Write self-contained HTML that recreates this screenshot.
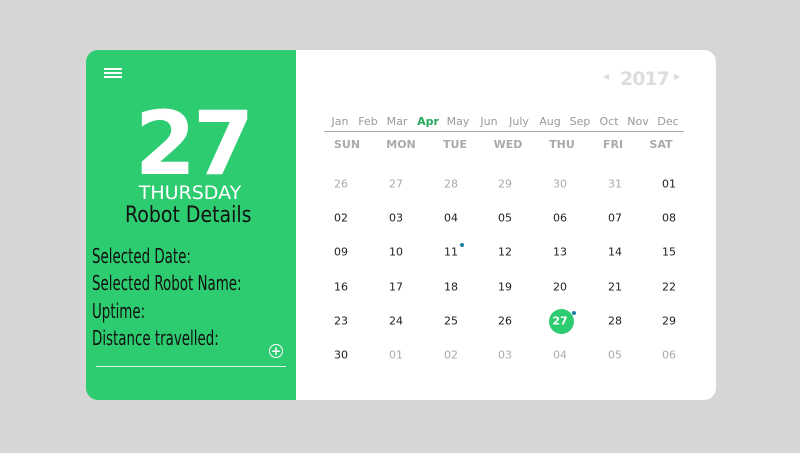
<!DOCTYPE html>
<html><head><style>
body{margin:0;width:800px;height:453px;background:#d6d6d6;position:relative;overflow:hidden;font-family:"DejaVu Sans","Liberation Sans",sans-serif}
.card{position:absolute;left:86px;top:50px;width:630px;height:350px;background:#fff;border-radius:12px;overflow:hidden}
.green{position:absolute;left:0;top:0;width:210px;height:350px;background:#2ecc71}
.a{position:absolute;white-space:nowrap}
.c{transform:translateX(-50%)}
.ham{position:absolute;left:18px;width:18px;height:2px;background:#fff}
.lbl{position:absolute;left:6px;font-size:20px;color:#111;white-space:nowrap;transform-origin:left top;transform:scaleX(.67)}
.m{position:absolute;top:65px;font-size:11px;color:#999;transform:translateX(-50%)}
.w{position:absolute;top:88px;font-size:11px;font-weight:bold;color:#aaa;transform:translateX(-50%)}
.d{position:absolute;font-size:11px;color:#222;transform:translate(-50%,-50%)}
.g{color:#aaa}
</style></head><body>
<div class="card">
<div class="green">
<div class="ham" style="top:18px"></div><div class="ham" style="top:22px"></div><div class="ham" style="top:26px"></div>
<div class="a c" style="left:107px;top:50px;font-size:88px;font-weight:bold;color:#fff;line-height:1;letter-spacing:-3px">27</div>
<div class="a c" style="left:104px;top:132px;font-size:19px;color:#fff">THURSDAY</div>
<div class="a" style="left:39px;top:153px;font-size:22px;color:#111;transform-origin:left top;transform:scaleX(.86)">Robot Details</div>
<div class="lbl" style="top:194px">Selected Date:</div>
<div class="lbl" style="top:221px">Selected Robot Name:</div>
<div class="lbl" style="top:249px">Uptime:</div>
<div class="lbl" style="top:276px">Distance travelled:</div>
<div class="a" style="left:183px;top:294px;width:12px;height:12px;border:1.5px solid #fff;border-radius:50%;color:#fff;font-size:12px;line-height:12px;text-align:center;font-weight:bold">+</div>
<div class="a" style="left:10px;top:316px;width:190px;height:1px;background:#d8f5e3"></div>
</div>
</div>
<div class="a" style="left:603px;top:72px;font-size:8px;color:#ddd">◀</div>
<div class="a" style="left:620px;top:68px;font-size:19px;font-weight:bold;color:#ddd;letter-spacing:-1px">2017</div>
<div class="a" style="left:674px;top:72px;font-size:8px;color:#ddd">▶</div>
<div class="a" style="left:324px;top:131px;width:360px;height:1px;background:#aaa"></div>
<div style="position:absolute;left:0;top:50px">
<span class="m" style="left:340px">Jan</span><span class="m" style="left:368px">Feb</span><span class="m" style="left:397px">Mar</span><span class="m" style="left:428px;color:#27a85b;font-weight:bold">Apr</span><span class="m" style="left:458px">May</span><span class="m" style="left:489px">Jun</span><span class="m" style="left:519px">July</span><span class="m" style="left:550px">Aug</span><span class="m" style="left:580px">Sep</span><span class="m" style="left:609px">Oct</span><span class="m" style="left:638px">Nov</span><span class="m" style="left:668px">Dec</span>
<span class="w" style="left:347px">SUN</span><span class="w" style="left:401px">MON</span><span class="w" style="left:455px">TUE</span><span class="w" style="left:508px">WED</span><span class="w" style="left:562px">THU</span><span class="w" style="left:613px">FRI</span><span class="w" style="left:661px">SAT</span>
</div>
<div class="a" style="left:549px;top:309px;width:25px;height:25px;border-radius:50%;background:#2ecc71"></div>
<div class="a" style="left:460px;top:243px;width:4px;height:4px;border-radius:50%;background:#1a7fa0"></div>
<div class="a" style="left:572px;top:311px;width:4px;height:4px;border-radius:50%;background:#1a7fa0"></div>
<div id="days"></div>
<script>
var xs=[341,396,451,505,560,615,669],ys=[184,218,252,287,321,355];
var d=[[26,1],[27,1],[28,1],[29,1],[30,1],[31,1],[1,0]];
for(var i=2;i<=30;i++)d.push([i,0]);for(i=1;i<=6;i++)d.push([i,1]);
var h='';d.forEach(function(v,k){var s=(v[0]<10?'0':'')+v[0];var st='left:'+xs[k%7]+'px;top:'+ys[Math.floor(k/7)]+'px';var cl='d'+(v[1]?' g':'');if(!v[1]&&v[0]==27){st+=';color:#fff;font-weight:bold';}h+='<span class="'+cl+'" style="'+st+'">'+s+'</span>';});
document.getElementById('days').innerHTML=h;
</script>
</body></html>
